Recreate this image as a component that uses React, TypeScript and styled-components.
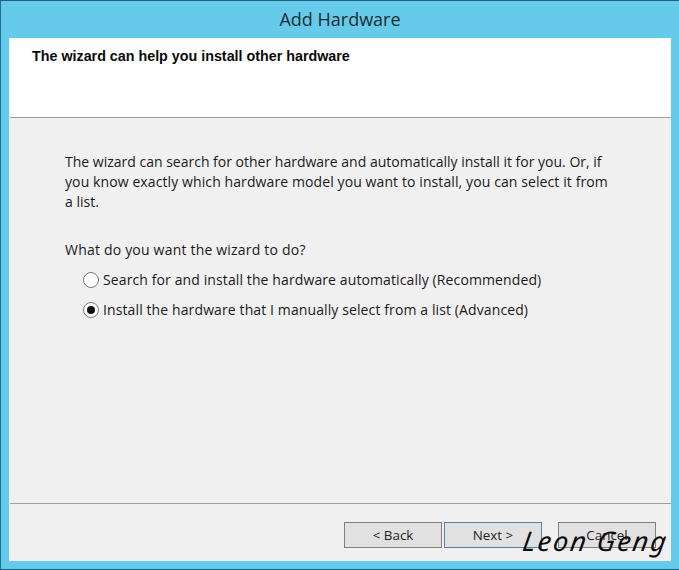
import React from 'react';
import styled, { createGlobalStyle } from 'styled-components';

const Global = createGlobalStyle`
  html, body { margin: 0; padding: 0; background: #66cbea; }
  #root { width: 679px; height: 570px; overflow: hidden; }
`;

const Frame = styled.div`
  position: relative;
  box-sizing: border-box;
  width: 679px;
  height: 570px;
  display: flex;
  flex-direction: column;
  padding: 0 8px 8px 8px;
  background: #66cbea;
  border-top: 1px solid #1d5f7e;
  border-left: 1px solid #1d6f93;
  border-bottom: 1px solid #1d5f7e;
  font-family: "Open Sans", "Noto Sans", sans-serif;
  color: #1a1a1a;
`;

const TitleBar = styled.div`
  height: 37px;
  flex: none;
  display: flex;
  align-items: center;
  justify-content: center;
  font-size: 18px;
  color: #1c2b33;
  padding-bottom: 1px;
  box-sizing: border-box;
`;

const Client = styled.div`
  flex: 1;
  display: flex;
  flex-direction: column;
  background: #f0f0f0;
  border-left: 1px solid #e8f6fb;
`;

const Header = styled.div`
  height: 80px;
  flex: none;
  box-sizing: border-box;
  background: #fff;
  border-bottom: 1px solid #a0a0a0;
  padding: 10px 0 0 22px;
  font-family: "Liberation Sans", Arial, sans-serif;
  font-weight: 700;
  font-size: 14.3px;
  line-height: 17px;
  color: #0a0a0a;
`;

const Body = styled.div`
  flex: 1;
  padding: 34px 40px 0 55px;
  font-size: 14px;
  line-height: 20px;
`;

const Paragraph = styled.p`
  margin: 0;
`;

const Line = styled.span<{ $spacing?: number }>`
  display: block;
  white-space: nowrap;
  letter-spacing: ${p => p.$spacing ?? 0}px;
`;

const Question = styled.p`
  margin: 28px 0 0;
  letter-spacing: 0.2px;
`;

const Options = styled.div`
  display: flex;
  flex-direction: column;
  gap: 10px;
  margin: 10px 0 0 18px;
  letter-spacing: 0.11px;
`;

const Option = styled.label`
  display: flex;
  align-items: center;
  gap: 4px;
  height: 20px;
`;

const Radio = styled.span<{ $checked?: boolean }>`
  box-sizing: border-box;
  width: 16px;
  height: 16px;
  border-radius: 50%;
  border: 1px solid #7a7a7a;
  background: #fff;
  display: flex;
  align-items: center;
  justify-content: center;
  &::after {
    content: '';
    width: 8px;
    height: 8px;
    border-radius: 50%;
    background: ${p => (p.$checked ? '#111' : 'transparent')};
  }
`;

const Footer = styled.div`
  height: 58px;
  flex: none;
  box-sizing: border-box;
  border-top: 1px solid #a0a0a0;
  display: flex;
  justify-content: flex-end;
  gap: 16px;
  padding: 18px 15px 0 0;
`;

const ButtonPair = styled.div`
  display: flex;
  gap: 2px;
`;

const Button = styled.div<{ $default?: boolean }>`
  box-sizing: border-box;
  width: 98px;
  height: 26px;
  display: flex;
  align-items: center;
  justify-content: center;
  background: #e1e1e1;
  border: 1px solid ${p => (p.$default ? '#5a7fa6' : '#7f7f7f')};
  font-size: 13.4px;
  color: #222;
`;

const Signature = styled.div`
  position: absolute;
  left: 522px;
  top: 520px;
  font-family: "Noto Sans", sans-serif;
  font-style: italic;
  font-size: 27px;
  line-height: 40px;
  letter-spacing: 2px;
  color: #0c0c0c;
  white-space: nowrap;
  transform: skewX(-8deg);
`;

export default function App() {
  return (
    <Frame>
      <Global />
      <TitleBar>Add Hardware</TitleBar>
      <Client>
        <Header>The wizard can help you install other hardware</Header>
        <Body>
          <Paragraph>
            <Line>The wizard can search for other hardware and automatically install it for you. Or, if</Line>
            <Line $spacing={0.1}>you know exactly which hardware model you want to install, you can select it from</Line>
            <Line>a list.</Line>
          </Paragraph>
          <Question>What do you want the wizard to do?</Question>
          <Options>
            <Option>
              <Radio />
              Search for and install the hardware automatically (Recommended)
            </Option>
            <Option>
              <Radio $checked />
              Install the hardware that I manually select from a list (Advanced)
            </Option>
          </Options>
        </Body>
        <Footer>
          <ButtonPair>
            <Button>&lt; Back</Button>
            <Button $default>Next &gt;</Button>
          </ButtonPair>
          <Button>Cancel</Button>
        </Footer>
      </Client>
      <Signature>Leon Geng</Signature>
    </Frame>
  );
}
